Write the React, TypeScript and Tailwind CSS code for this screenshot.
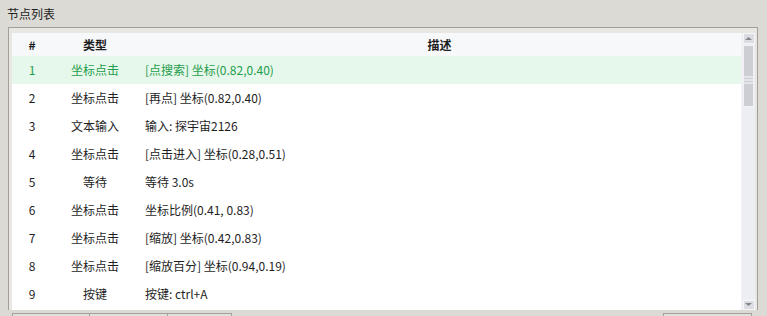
const rows = [
  { id: 1, type: "坐标点击", desc: "[点搜索] 坐标(0.82,0.40)", active: true },
  { id: 2, type: "坐标点击", desc: "[再点] 坐标(0.82,0.40)" },
  { id: 3, type: "文本输入", desc: "输入: 探宇宙2126" },
  { id: 4, type: "坐标点击", desc: "[点击进入] 坐标(0.28,0.51)" },
  { id: 5, type: "等待", desc: "等待 3.0s" },
  { id: 6, type: "坐标点击", desc: "坐标比例(0.41, 0.83)" },
  { id: 7, type: "坐标点击", desc: "[缩放] 坐标(0.42,0.83)" },
  { id: 8, type: "坐标点击", desc: "[缩放百分] 坐标(0.94,0.19)" },
  { id: 9, type: "按键", desc: "按键: ctrl+A" },
];

const Scrollbar = () => (
  <div className="w-[14px] bg-[#eceef3] flex flex-col items-center pt-[0px] border-l border-[#f4f4f6]">
    <div className="w-[12px] h-[11px] mt-[0px] bg-[#dcdde2] border border-[#f6f6f8] flex items-center justify-center">
      <svg width="7" height="4" viewBox="0 0 7 4">
        <path d="M3.5 0 L7 3 L0 3 Z" fill="#85858c" />
      </svg>
    </div>
    <div className="w-[11px] h-[62px] mt-[1px] bg-[#cdcdd4] border border-[#f2f2f4] flex flex-col justify-center items-stretch">
      <div className="mt-[8px] flex flex-col gap-[1px]">
        <div className="h-[2px] bg-[#e4e4ea]" />
        <div className="h-[2px] bg-[#e4e4ea]" />
        <div className="h-[2px] bg-[#e4e4ea]" />
      </div>
    </div>
    <div className="flex-1" />
    <div className="w-[12px] h-[10px] bg-[#dcdde2] border border-[#f6f6f8] flex items-center justify-center">
      <svg width="7" height="4" viewBox="0 0 7 4">
        <path d="M0 0 L7 0 L3.5 3 Z" fill="#85858c" />
      </svg>
    </div>
  </div>
);

const App = () => {
  return (
    <div
      className="w-[767px] h-[316px] bg-[#dcdad5] overflow-hidden text-[12px] text-[#1e1e1e]"
      style={{ fontFamily: '"Noto Sans CJK SC", "Noto Sans", sans-serif' }}
    >
      {/* Title */}
      <div className="h-[27px] pl-[7px] pt-[5px] leading-[17px]">节点列表</div>

      {/* Panel */}
      <div className="ml-[8px] w-[750px] h-[283px] border-t border-l border-r border-[#a29f98] bg-[#e9e7e3] pt-[5px] pl-[3px] pr-[2px] flex">
        <div className="flex-1 bg-white flex flex-col h-[277px]">
          {/* Header */}
          <div className="h-[23px] bg-[#f7f8fa] flex items-center font-bold">
            <div className="w-[40px] text-center">#</div>
            <div className="w-[86px] text-center">类型</div>
            <div className="flex-1 text-center">描述</div>
          </div>
          {rows.map((r) => (
            <div
              key={r.id}
              className={`h-[28px] flex items-center ${r.active ? "bg-[#e6f7ec] text-[#1f9d4a]" : ""}`}
            >
              <div className="w-[40px] text-center">{r.id}</div>
              <div className="w-[86px] text-center">{r.type}</div>
              <div className="flex-1 pl-[7px]">{r.desc}</div>
            </div>
          ))}
        </div>
        <Scrollbar />
      </div>

      {/* Bottom buttons (cut off) */}
      <div className="flex mt-[3px] pl-[12px]">
        <div className="w-[78px] h-[6px] border-t border-l border-r border-[#a5a29b] bg-[#e1dfda]" />
        <div className="w-[78px] h-[6px] border-t border-r border-[#a5a29b] bg-[#e1dfda]" />
        <div className="w-[64px] h-[6px] border-t border-r border-[#a5a29b] bg-[#e1dfda]" />
        <div className="flex-1" />
        <div className="w-[89px] h-[6px] mr-[15px] border-t border-l border-r border-[#a5a29b] bg-[#e1dfda]" />
      </div>
    </div>
  );
};

export default App;
